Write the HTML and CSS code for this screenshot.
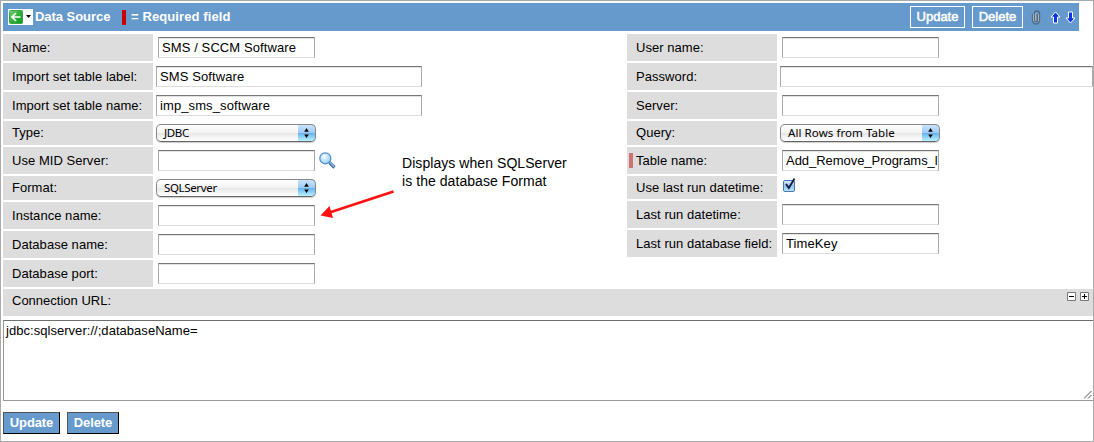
FILE: index.html
```html
<!DOCTYPE html>
<html lang="en">
<head>
<meta charset="utf-8">
<title>Data Source</title>
<link rel="stylesheet" href="styles.css">
</head>
<body>
<div class="frame">
  <header class="titlebar">
    <span class="back">
      <svg width="25" height="16" viewBox="0 0 25 16">
        <defs><linearGradient id="green" x1="0" y1="0" x2="1" y2="1"><stop offset="0" stop-color="#7bd27b"/><stop offset=".5" stop-color="#2fae38"/><stop offset="1" stop-color="#0b9a1d"/></linearGradient></defs>
        <rect width="25" height="16" fill="#fff"/>
        <rect x="1.500" y="1.500" width="13" height="13" rx="1" fill="url(#green)" stroke="#3aa544"/>
        <path d="M12.500 8H4M8 4L4 8l4 4" fill="none" stroke="#fff" stroke-width="1.700"/>
        <path d="M18 6h5l-2.500 3z" fill="#000"/>
      </svg>
    </span>
    <span class="title">Data Source</span>
    <span class="mandatory"></span>
    <span class="legend">= Required field</span>
    <span class="tools">
      <button class="tool-button update">Update</button>
      <button class="tool-button delete">Delete</button>
      <svg class="clip" width="10" height="15" viewBox="0 0 10 15" fill="none">
        <path d="M1.500 4v6.500a3.500 3.500 0 0 0 7 0V3.500a2.500 2.500 0 0 0-5 0V10a1.500 1.500 0 0 0 3 0V4" stroke="#536a80" stroke-width="1.300"/>
        <path d="M2.500 4v7M7.500 4v7M4.500 3v8" stroke="#b9bdb9" stroke-width=".8"/>
      </svg>
      <svg class="up" width="11" height="13" viewBox="0 0 11 13"><path d="M5.500 1L10 6H7.500v6h-4V6H1z" fill="#0a36e8" stroke="#fff"/></svg>
      <svg class="down" width="11" height="13" viewBox="0 0 11 13"><path d="M5.500 12L10 7H7.500V1h-4v6H1z" fill="#0a36e8" stroke="#fff"/></svg>
    </span>
  </header>

  <main class="columns">
    <section class="column left">
      <div class="row"><label>Name:</label><span class="input">SMS / SCCM Software</span></div>
      <div class="row"><label>Import set table label:</label><span class="input wide">SMS Software</span></div>
      <div class="row"><label>Import set table name:</label><span class="input wide">imp_sms_software</span></div>
      <div class="row short"><label>Type:</label><span class="select"><span class="choice tight">JDBC</span><span class="knob"><svg width="7" height="12" viewBox="0 0 7 12"><path d="M3.500 1L5.800 4.800H1.200zM1.200 7.500h4.600L3.500 11z"/></svg></span></span></div>
      <div class="row"><label>Use MID Server:</label><span class="input"></span>
        <svg class="lookup" width="17" height="17" viewBox="0 0 17 17">
          <defs><radialGradient id="lens" cx=".4" cy=".35"><stop offset="0" stop-color="#fff"/><stop offset="1" stop-color="#a8dafa"/></radialGradient></defs>
          <path d="M10.500 10.500l5 5" stroke="#416b9c" stroke-width="3.200"/>
          <path d="M11 10.500l4.200 4.200" stroke="#88bdf0" stroke-width="1.600"/>
          <circle cx="6.300" cy="6.300" r="5.500" fill="url(#lens)" stroke="#4d89d0" stroke-width="1.200"/>
        </svg>
      </div>
      <div class="row short"><label>Format:</label><span class="select"><span class="choice tight">SQLServer</span><span class="knob"><svg width="7" height="12" viewBox="0 0 7 12"><path d="M3.500 1L5.800 4.800H1.200zM1.200 7.500h4.600L3.500 11z"/></svg></span></span></div>
      <div class="row"><label>Instance name:</label><span class="input"></span></div>
      <div class="row"><label>Database name:</label><span class="input"></span></div>
      <div class="row"><label>Database port:</label><span class="input"></span></div>
    </section>

    <section class="column right">
      <div class="row"><label>User name:</label><span class="input"></span></div>
      <div class="row"><label>Password:</label><span class="input wide"></span></div>
      <div class="row"><label>Server:</label><span class="input"></span></div>
      <div class="row short"><label>Query:</label><span class="select"><span class="choice">All Rows from Table</span><span class="knob"><svg width="7" height="12" viewBox="0 0 7 12"><path d="M3.500 1L5.800 4.800H1.200zM1.200 7.500h4.600L3.500 11z"/></svg></span></span></div>
      <div class="row"><label class="required">Table name:</label><span class="input filled">Add_Remove_Programs_l</span></div>
      <div class="row shorter"><label>Use last run datetime:</label>
        <svg class="check" width="14" height="16" viewBox="0 0 14 16">
          <defs><linearGradient id="aqua" x2="0" y2="1"><stop offset="0" stop-color="#e4f1fd"/><stop offset=".5" stop-color="#8fc3f2"/><stop offset="1" stop-color="#b9ecff"/></linearGradient></defs>
          <rect x="1.500" y="3.500" width="11" height="11" rx="1.500" fill="url(#aqua)" stroke="#4778b4"/>
          <path d="M4 7l2.800 4L12.500 1.500" fill="none" stroke="#16223c" stroke-width="1.900"/>
        </svg>
      </div>
      <div class="row"><label>Last run datetime:</label><span class="input"></span></div>
      <div class="row"><label>Last run database field:</label><span class="input">TimeKey</span></div>
    </section>
    <div class="callout">
      <p>Displays when SQLServer<br>is the database Format</p>
      <svg width="80" height="30" viewBox="0 0 80 30"><path d="M78.500 1.500L13 23" stroke="#f11" stroke-width="2.500"/><path d="M5.500 25.500L14.500 16l3.500 12z" fill="#f11"/></svg>
    </div>
  </main>

  <div class="section-label">
    <span>Connection URL:</span>
    <svg width="22" height="9" viewBox="0 0 22 9"><path d="M.5.5h8v8h-8zM13.500.5h8v8h-8z" fill="#fff" stroke="#777"/><path d="M2 4.500h5M15 4.500h5M17.500 2v5" stroke="#000"/></svg>
  </div>
  <div class="textarea">jdbc:sqlserver://;databaseName=
    <svg class="grip" width="8" height="8" viewBox="0 0 8 8"><path d="M0 7.500L7.500 0M4 7.500L7.500 4" stroke="#555"/></svg>
  </div>
  <footer class="actions">
    <button class="action update">Update</button>
    <button class="action delete">Delete</button>
  </footer>
</div>
</body>
</html>
```
FILE: styles.css
```css
* { box-sizing: border-box; }
body {
  margin: 0;
  background: #fff;
  color: #000;
  font: 13px/16px "Liberation Sans", Arial, sans-serif;
  letter-spacing: 0.04px;
}
button { font: inherit; padding: 0; margin: 0; border-radius: 0; }
svg { display: block; flex: none; }
.frame {
  width: 1094px;
  height: 442px;
  border: 1px solid #aaa;
  padding: 2px 0 0 2px;
  overflow: hidden;
}
.titlebar {
  display: flex;
  align-items: center;
  width: 1076px;
  height: 28px;
  padding-left: 5px;
  background: #69c;
  color: #fff;
  font-weight: bold;
  white-space: nowrap;
}
.title { width: 89px; padding-left: 2px; letter-spacing: -0.05px; }
.mandatory { width: 4px; height: 15px; background: #c00; }
.legend { padding-left: 5px; letter-spacing: 0.1px; }
.tools { display: flex; align-items: center; margin-left: auto; padding-right: 3px; }
.tool-button {
  height: 22px;
  border: 1px solid #fff;
  background: transparent;
  color: #fff;
  font-weight: normal;
  -webkit-text-stroke: 0.5px #fff;
}
.tool-button.update { width: 55px; margin-right: 7px; }
.tool-button.delete { width: 51px; margin-right: 8px; }
.clip { margin-right: 9px; }
.up { margin-right: 4px; }

.columns { display: flex; position: relative; padding-top: 3px; height: 258px; }
.column { display: flex; flex-direction: column; gap: 2px; }
.left { width: 624px; }
.right { width: 466px; }
.row { display: flex; align-items: flex-start; height: 27px; }
.row.short { height: 24px; }
.row.shorter { height: 23px; }
.row label {
  display: flex;
  align-items: center;
  flex: none;
  width: 150px;
  height: 100%;
  padding: 1px 0 0 9px;
  background: #ddd;
  white-space: nowrap;
}
.row.short label { padding-top: 0; }
.row label.required { padding-left: 2px; }
.required::before { content: ""; width: 4px; height: 15px; margin: -1px 3px 0 0; background: #cf7272; }
.input {
  flex: none;
  width: 157px;
  height: 21px;
  margin: 3px 0 0 5px;
  padding: 2px 2px 0 3px;
  border: 1px solid #aaa;
  border-top: 1px solid #777;
  border-bottom-color: #ddd;
  box-shadow: inset 0 1px #e2e2e2;
  line-height: 16px;
  white-space: nowrap;
  letter-spacing: 0.1px;
}
.input.filled { letter-spacing: -0.04px; }
.input.wide { width: 266px; margin-left: 3px; }
.right .input.wide { width: 313px; }
.select {
  display: flex;
  width: 160px;
  height: 18px;
  margin: 3px 0 0 3px;
  border: 1px solid #888;
  border-bottom-color: #666;
  border-radius: 5px;
  background: linear-gradient(#fff 0, #f3f3f3 48%, #e6e6e6 50%, #fff 100%);
  box-shadow: 0 1px 1px #ccc;
  overflow: hidden;
  font: 11.500px/16px "Noto Sans", sans-serif;
}
.choice { flex: 1; padding-left: 7px; letter-spacing: 0.08px; white-space: nowrap; }
.choice.tight { letter-spacing: -0.35px; }
.knob {
  display: flex;
  align-items: center;
  justify-content: center;
  width: 18px;
  height: 18px;
  margin: -1px -1px 0 0;
  border: 1px solid #2f61a8;
  border-left: 0;
  border-top-color: #283f91;
  border-radius: 0 5px 5px 0;
  background: linear-gradient(#cae4fb 0, #9dccf5 48%, #68b4f0 52%, #b7f2ff 100%);
}
.lookup { margin: 5px 0 0 4px; }
.check { margin: 1px 0 0 5px; }
.callout {
  position: absolute;
  left: 312px;
  top: 123px;
}
.callout p { margin: 0 0 0 87px; font-size: 14px; line-height: 18px; white-space: nowrap; letter-spacing: 0.06px; }

.section-label {
  display: flex;
  justify-content: space-between;
  height: 27px;
  padding: 4px 4px 0 9px;
  background: #ddd;
  letter-spacing: 0;
}
.section-label svg { margin-top: -1px; }
.textarea {
  position: relative;
  height: 81px;
  margin-top: 4px;
  padding: 2px;
  border: 1px solid #999;
  border-top-color: #707070;
  border-right: 0;
}
.grip { position: absolute; right: 1px; bottom: 1px; }
.actions { display: flex; gap: 7px; margin-top: 11px; }
.action {
  height: 22px;
  border: 1px solid #000;
  border-top-color: #555;
  border-left-color: #555;
  background: #69c;
  color: #fff;
  font-weight: bold;
  letter-spacing: -0.1px;
}
.action.update { width: 57px; }
.action.delete { width: 52px; }
```
